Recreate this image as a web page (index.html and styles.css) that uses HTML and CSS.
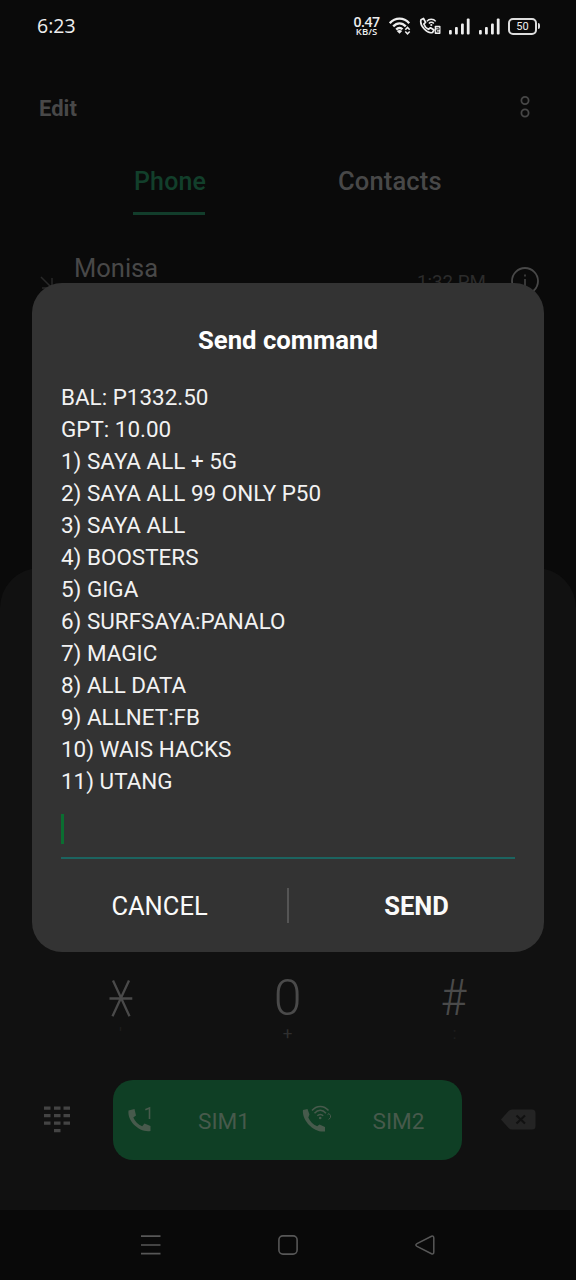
FILE: index.html
```html
<!DOCTYPE html>
<html lang="en">
<head>
<meta charset="utf-8">
<title>Send command</title>
<link rel="stylesheet" href="styles.css">
</head>
<body>
<div class="screen">
  <header class="status">
    <time class="clock">6:23</time>
    <div class="speed"><b>0.47</b><span>KB/S</span></div>
    <svg class="wifi" width="22" height="18" viewBox="0 0 22 18" fill="none" stroke="#eee" stroke-width="2.3">
      <path d="M0.8 6.2C6.2 .2 14.800 .2 20.200 6.200M4.200 9.400C8 5.300 13 5.300 16.800 9.400M7.200 12.600C9.200 10.500 11.800 10.500 13.500 12.300"/>
      <path d="M10.500 16.800L7.800 14C9.500 12.500 11.500 12.500 13.200 14Z" fill="#eee" stroke="none"/>
      <path d="M16.300 12.700L18.500 10.400L20.700 12.700M16.300 14.500L18.500 16.800L20.700 14.500" stroke-width="1.500"/>
    </svg>
    <svg class="vowifi" width="22" height="18" viewBox="0 0 22 18" fill="none" stroke="#eee">
      <path d="M2 2.800L4.500 1.500L6.600 5.300L4.800 7C5.600 9.500 7.300 11.300 9.500 12.300L11.500 10.800L15 13L13.500 15.500C8.500 17 .3 9 2 2.800Z" stroke-width="1.700" stroke-linejoin="round"/>
      <path d="M7.800 4.400C10 1.500 14.500 1.500 16.700 4.400M9.900 6.500C11.300 4.900 13.400 4.900 14.800 6.500" stroke-width="1.500"/>
      <circle cx="12.300" cy="8" r="1.100" fill="#eee" stroke="none"/>
      <rect x="15.700" y="8.700" width="5.800" height="8.300" rx=".7" fill="#eee" stroke="none"/>
      <path d="M17.200 10.800H20V12.800H17.400V15H20.200" stroke="#222" stroke-width="1"/>
    </svg>
    <svg class="signal" width="21" height="17" viewBox="0 0 21 17" fill="#eee">
      <rect x="0" y="12" width="2.800" height="4.500" rx="1"/><rect x="6" y="9" width="2.800" height="7.500" rx="1"/><rect x="12" y="5.500" width="2.800" height="11" rx="1"/><rect x="17.800" y=".5" width="2.800" height="16" rx="1"/>
    </svg>
    <svg class="signal signal-two" width="21" height="17" viewBox="0 0 21 17" fill="#eee">
      <rect x="0" y="12" width="2.800" height="4.500" rx="1"/><rect x="6" y="9" width="2.800" height="7.500" rx="1"/><rect x="12" y="5.500" width="2.800" height="11" rx="1"/><rect x="17.800" y=".5" width="2.800" height="16" rx="1"/>
    </svg>
    <div class="battery">50</div><i class="battery-tip"></i>
  </header>

  <div class="toolbar">
    <span class="edit">Edit</span>
    <svg width="12" height="24" viewBox="0 0 12 24" fill="none" stroke="#474747" stroke-width="1.800"><circle cx="6" cy="5.500" r="3.600"/><circle cx="6" cy="18" r="3.600"/></svg>
  </div>

  <nav class="tabs">
    <span class="tab tab-on">Phone</span>
    <span class="tab">Contacts</span>
  </nav>

  <div class="call">
    <svg class="missed" width="14" height="14" viewBox="0 0 14 14" fill="none" stroke="#292929" stroke-width="1.500"><path d="M1 1L11 11M12 2V12H2"/></svg>
    <span class="name">Monisa</span>
    <span class="when">1:32 PM</span>
    <svg class="info" width="28" height="28" viewBox="0 0 28 28" fill="none" stroke="#484848" stroke-width="1.800"><circle cx="14" cy="14" r="13"/><path d="M14 12V21M14 7.500V9.500" stroke-width="1.500"/></svg>
  </div>

  <section class="dialer">
    <div class="keys">
      <div class="key"><svg width="24" height="37" viewBox="0 0 24 37" fill="none" stroke="#4a4a4a" stroke-width="2.300"><path d="M4 .5L20.500 36.300M20 .5L3.500 36.300M.5 18.500H23.300"/></svg><small class="faint">'</small></div>
      <div class="key"><span>0</span><small>+</small></div>
      <div class="key"><span class="hash">#</span><small class="faint">:</small></div>
    </div>
    <div class="actions">
      <svg class="pad" width="27" height="27" viewBox="0 0 27 27" fill="#444">
        <path d="M0 .5h6.500v3.200H0zM10 .5h6.500v3.200H10zM19.500 .5H26v3.200h-6.500zM0 8h6.500v3.200H0zM10 8h6.500v3.200H10zM19.500 8H26v3.200h-6.500zM0 15.500h6.500v3.200H0zM10 15.500h6.500v3.200H10zM19.500 15.500H26v3.200h-6.500zM10 23h6.500v3.200H10z"/>
      </svg>
      <div class="sims">
        <div class="sim sim-one">
          <svg width="26" height="28" viewBox="0 0 26 28"><path d="M1.500 5.500L7.500 4L9 10.500L6.300 12.500C8 16.500 11 19.400 15.200 21.200L17.500 18.500L23.500 21V26C13 28 0 16.500 1.500 5.500Z" fill="#475a4c"/><path d="M18.300 4.800L22.500 3V14" fill="none" stroke="#475a4c" stroke-width="1.600"/></svg>
          <span>SIM1</span>
        </div>
        <div class="sim sim-two">
          <svg width="30" height="28" viewBox="0 0 30 28"><path d="M1 5L5.500 4L7.500 9.500L6.300 12.500C8 16.500 11 19.400 15.200 21.200L17.500 19.500L23 22V26.500C11 28 -.5 14 1 5Z" fill="#475a4c"/><path d="M10 5.500C14.500 0 22 0 26.500 5.500M12.500 8.200C16 4.300 20.500 4.300 24 8.200M15.300 10.800C17 8.900 19.600 8.900 21.200 10.800" fill="none" stroke="#475a4c" stroke-width="1.500"/><circle cx="18.200" cy="13" r="1.300" fill="#475a4c"/><path d="M25.500 9.700L27 8.500L28.500 10.500V12.500L26.700 14.500" fill="none" stroke="#475a4c" stroke-width="1"/></svg>
          <span>SIM2</span>
        </div>
      </div>
      <svg class="erase" width="35" height="22" viewBox="0 0 35 22"><path d="M0 10.500L7.500 2Q9 .5 11 .5H31Q34.500 .5 34.500 4V17Q34.500 20.500 31 20.500H11Q9 20.500 7.500 19Z" fill="#242424"/><path d="M15.500 6.500L24 14.500M24 6.500L15.500 14.500" stroke="#111" stroke-width="2.200"/></svg>
    </div>
  </section>

  <footer class="navbar">
    <svg width="20" height="20" viewBox="0 0 20 20" stroke="#575757" stroke-width="1.700"><path d="M0 1.200H19.500M0 10H19.500M0 18.700H19.500"/></svg>
    <svg width="20" height="20" viewBox="0 0 20 20" fill="none" stroke="#575757" stroke-width="1.600"><rect x=".9" y=".9" width="18.200" height="18.200" rx="4"/></svg>
    <svg width="20" height="20" viewBox="0 0 20 20" fill="none" stroke="#575757" stroke-width="1.500"><path d="M2 8.700L16.500 1.300Q18.800 .5 18.800 3V17Q18.800 19.500 16.500 18.700L2 11.300Q-.3 10 2 8.700Z"/></svg>
  </footer>

  <div class="dialog" role="dialog">
    <h1 class="title">Send command</h1>
    <div class="message">BAL: P1332.50<br>GPT: 10.00<br>1) SAYA ALL + 5G<br>2) SAYA ALL 99 ONLY P50<br>3) SAYA ALL<br>4) BOOSTERS<br>5) GIGA<br>6) SURFSAYA:PANALO<br>7) MAGIC<br>8) ALL DATA<br>9) ALLNET:FB<br>10) WAIS HACKS<br>11) UTANG</div>
    <div class="field"><i class="caret"></i></div>
    <div class="buttons"><span class="button">CANCEL</span><i class="divider"></i><span class="button send">SEND</span></div>
  </div>
</div>
</body>
</html>
```
FILE: styles.css
```css
* { box-sizing: border-box; }
body { margin: 0; background: #0a0a0a; font-family: Roboto, "Liberation Sans", sans-serif; }
svg { display: block; flex: none; }
.screen { position: relative; width: 576px; height: 1280px; display: flex; flex-direction: column; overflow: hidden; background: #0a0a0a; }

.status { height: 52px; display: flex; align-items: center; padding-left: 37px; color: #eee; }
.clock { width: 316px; font: 500 19.5px/24px "Open Sans", sans-serif; }
.speed { width: 27px; text-align: center; font-family: "Open Sans", sans-serif; }
.speed b, .speed span { display: block; white-space: nowrap; }
.speed b { font-size: 14px; line-height: 11px; font-weight: 600; letter-spacing: -.5px; }
.speed span { font-size: 9.5px; line-height: 9px; font-weight: 600; }
.wifi { margin-left: 9px; }
.vowifi { margin-left: 8px; }
.signal { margin-left: 8px; }
.signal-two { margin-left: 9px; }
.battery { width: 29px; height: 17px; margin-left: 8px; border: 2px solid #ddd; border-radius: 5px; text-align: center; font-size: 11px; line-height: 13px; }
.battery-tip { width: 2px; height: 6px; margin-left: 1px; border-radius: 0 2px 2px 0; background: #ddd; }

.toolbar { height: 110px; display: flex; justify-content: space-between; align-items: center; padding: 0 45px 0 39px; }
.edit { margin-top: 3px; font-size: 22px; font-weight: 700; line-height: 28px; color: #484848; }

.tabs { height: 53px; display: flex; }
.tab { margin-left: 133px; font-size: 25.5px; font-weight: 500; line-height: 38px; letter-spacing: .15px; color: #484848; }
.tab-on { width: 72px; height: 53px; padding: 1px 0 0 1px; border-bottom: 3px solid #123d2b; font-size: 25px; color: #123f2b; }

.call { height: 353px; display: flex; padding: 39px 37px 0 40px; }
.missed { margin-top: 22px; }
.name { width: 343px; margin-left: 20px; font-size: 25.5px; line-height: 29px; color: #484848; }
.when { width: 94px; font-size: 18.7px; line-height: 24px; margin-top: 16px; color: #2c2c2c; white-space: nowrap; }
.info { margin-top: 13px; }

.dialer { height: 642px; flex: none; display: flex; flex-direction: column; padding-top: 408px; border-radius: 40px 40px 0 0; background: #111; }
.keys { height: 104px; display: grid; grid-template-columns: 167px 167px 167px; padding-left: 37px; }
.key { display: flex; flex-direction: column; align-items: center; color: #4a4a4a; }
.key svg { margin-top: 4px; }
.key span { height: 41px; font-size: 50px; font-weight: 300; line-height: 44px; }
.key .hash { transform: translateX(-1px) scaleX(.88); }
.key small { margin-top: 6px; font-size: 17px; line-height: 20px; color: #2f2f2f; }
.key .faint { color: #1e1e1e; }
.actions { height: 80px; display: flex; align-items: center; padding-left: 44px; }
.pad { margin-top: -1px; }
.sims { width: 349px; height: 80px; margin-left: 42px; display: flex; align-items: center; border-radius: 20px; background: #0f3f25; }
.sim { display: flex; align-items: center; width: 175px; padding-left: 14px; font-size: 22.6px; color: #475a4c; }
.sim svg { margin-top: -2px; }
.sim span { margin: 3px 0 0 45px; }
.sim-two span { margin-left: 41px; }
.erase { margin-left: 39px; }

.navbar { height: 70px; display: flex; justify-content: space-between; align-items: center; padding: 0 141px; background: #090909; }

.dialog { position: absolute; left: 32px; top: 283px; width: 512px; height: 669px; padding: 41px 29px 0; border-radius: 30px; background: #333; color: #fafafa; }
.title { margin: 0; font-size: 25.7px; font-weight: 700; line-height: 32px; text-align: center; color: #fff; }
.message { margin-top: 25px; font-size: 22.45px; line-height: 32px; color: #f2f2f2; white-space: nowrap; }
.field { height: 62px; padding-top: 17px; border-bottom: 2px solid #1c6460; }
.caret { display: block; width: 3px; height: 30px; background: #0b6e31; }
.buttons { height: 94px; display: flex; align-items: center; margin: 0 -29px; }
.button { width: 255px; font-size: 25.5px; text-align: center; }
.send { font-weight: 700; }
.divider { width: 2px; height: 35px; margin-top: -2px; background: #555; }
```
